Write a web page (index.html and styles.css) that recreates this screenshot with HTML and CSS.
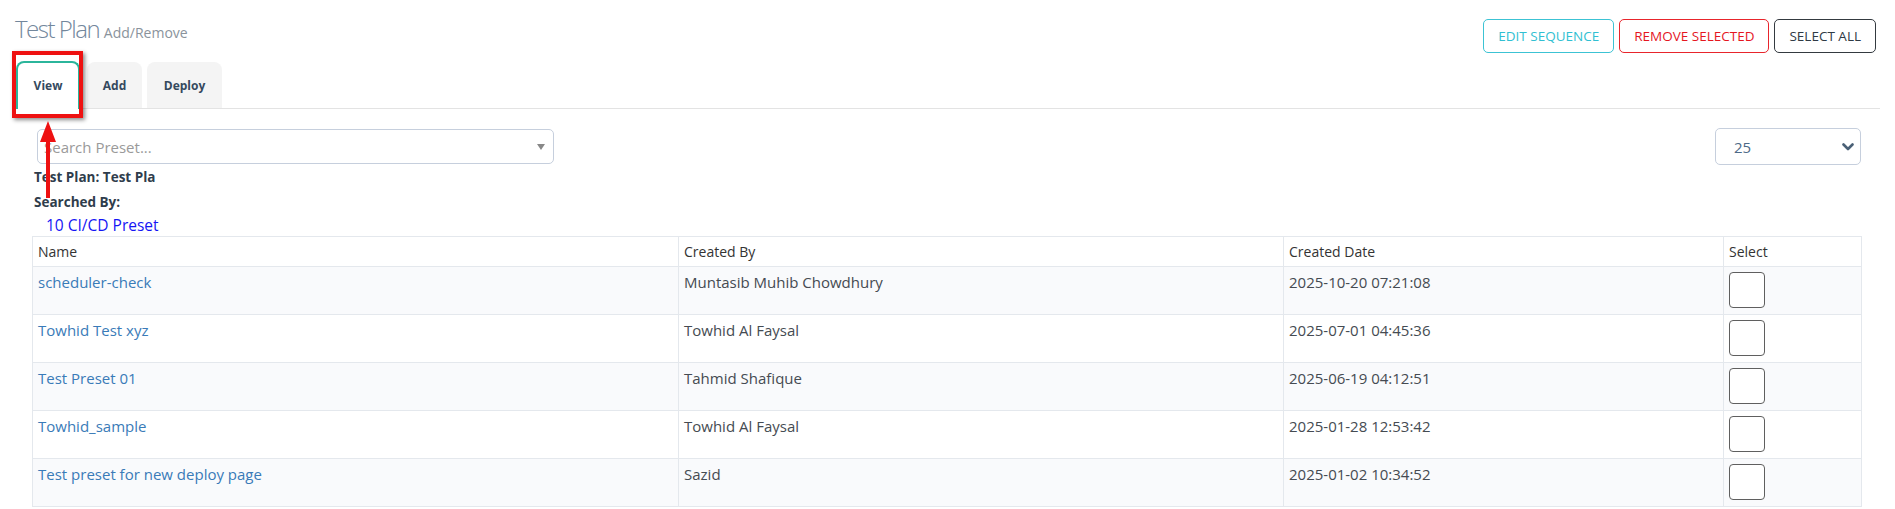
FILE: index.html
```html
<!DOCTYPE html>
<html lang="en">
<head>
<meta charset="utf-8">
<title>Test Plan Add/Remove</title>
<link rel="stylesheet" href="styles.css">
</head>
<body>
<div class="page">
  <div class="header">
    <h3 class="title">Test Plan <small>Add/Remove</small></h3>
    <div class="actions">
      <button class="btn btn-info">EDIT SEQUENCE</button>
      <button class="btn btn-danger">REMOVE SELECTED</button>
      <button class="btn btn-dark">SELECT ALL</button>
    </div>
  </div>

  <ul class="tabs">
    <li class="tab active">View</li>
    <li class="tab">Add</li>
    <li class="tab">Deploy</li>
  </ul>

  <div class="panel">
    <div class="search-row">
      <div class="search-select">
        <span class="placeholder">Search Preset...</span>
        <svg class="tri" width="8" height="6" viewBox="0 0 8 6"><path d="M0 0 H8 L4 6 Z" fill="#888"/></svg>
      </div>
      <div class="size-select">
        <span>25</span>
        <svg class="chev" width="12" height="8" viewBox="0 0 12 8"><path d="M1.5 1.5 L6 6 L10.5 1.5" fill="none" stroke="#4a6076" stroke-width="2.6" stroke-linecap="round" stroke-linejoin="round"/></svg>
      </div>
    </div>

    <div class="meta">
      <div class="meta-line">Test Plan: Test Pla</div>
      <div class="meta-line">Searched By:</div>
      <div class="preset-count">10 CI/CD Preset</div>
    </div>

    <table class="grid">
      <colgroup>
        <col class="c-name"><col class="c-by"><col class="c-date"><col class="c-sel">
      </colgroup>
      <thead>
        <tr><th>Name</th><th>Created By</th><th>Created Date</th><th>Select</th></tr>
      </thead>
      <tbody>
        <tr><td><a href="#">scheduler-check</a></td><td>Muntasib Muhib Chowdhury</td><td>2025-10-20 07:21:08</td><td><input type="checkbox" class="check"></td></tr>
        <tr><td><a href="#">Towhid Test xyz</a></td><td>Towhid Al Faysal</td><td>2025-07-01 04:45:36</td><td><input type="checkbox" class="check"></td></tr>
        <tr><td><a href="#">Test Preset 01</a></td><td>Tahmid Shafique</td><td>2025-06-19 04:12:51</td><td><input type="checkbox" class="check"></td></tr>
        <tr><td><a href="#">Towhid_sample</a></td><td>Towhid Al Faysal</td><td>2025-01-28 12:53:42</td><td><input type="checkbox" class="check"></td></tr>
        <tr><td><a href="#">Test preset for new deploy page</a></td><td>Sazid</td><td>2025-01-02 10:34:52</td><td><input type="checkbox" class="check"></td></tr>
      </tbody>
    </table>
  </div>
</div>

<div class="callout-box"></div>
<svg class="callout-arrow" width="20" height="82" viewBox="0 0 20 82">
  <path d="M10 0 L18 21 L12 21 L12 77 L8 77 L8 21 L2 21 Z" fill="#ee1111"/>
</svg>
</body>
</html>
```

FILE: styles.css
```css
* { box-sizing: border-box; }

body {
  margin: 0;
  position: relative;
  background: #fff;
  font-family: "Open Sans", "Liberation Sans", sans-serif;
  color: #444;
}

.page {
  padding: 0 15px;
}

.header {
  display: flex;
  justify-content: space-between;
  align-items: flex-start;
}

.title {
  margin: 12px 0 0 0;
  font-size: 24px;
  line-height: 33px;
  font-weight: 300;
  color: #73879c;
  letter-spacing: -1.5px;
}

.title small {
  font-size: 14px;
  font-weight: 400;
  color: #8a939c;
  letter-spacing: 0;
}

.actions {
  margin-top: 19px;
  display: flex;
  gap: 5px;
  margin-right: 4px;
}

.btn {
  height: 34px;
  padding: 0 14px;
  background: #fff;
  border: 1px solid;
  border-radius: 5px;
  font-family: "Open Sans", "Liberation Sans", sans-serif;
  font-size: 13.5px;
  font-weight: 500;
}

.btn-info { color: #31bfd2; border-color: #3cc3d4; }
.btn-danger { color: #e5161f; border-color: #e8252c; }
.btn-dark { color: #2f3a45; border-color: #343a40; }

.tabs {
  list-style: none;
  margin: 8px 0 0;
  padding: 0;
  display: flex;
  align-items: flex-end;
  height: 48px;
  border-bottom: 1px solid #e3e3e3;
}

.tab {
  height: 46px;
  display: flex;
  align-items: center;
  justify-content: center;
  margin-right: 5px;
  background: #f4f4f4;
  border-radius: 8px 8px 0 0;
  font-size: 12px;
  font-weight: 700;
  color: #34495e;
}

.tab:nth-child(2) { width: 55px; }
.tab:nth-child(3) { width: 75px; }

.tab.active {
  width: 64px;
  height: 48px;
  margin-left: 1px;
  margin-right: 7px;
  margin-bottom: -1px;
  background: #fff;
  border: 2px solid #2bb59b;
  border-bottom: none;
  padding-bottom: 2px;
}

.panel {
  padding: 0 18px 0 17px;
}

.search-row {
  margin-top: 19px;
  display: flex;
  justify-content: space-between;
  align-items: center;
}

.search-select {
  margin-left: 5px;
  width: 517px;
  height: 35px;
  border: 1px solid #c6cfdd;
  border-radius: 5px;
  display: flex;
  align-items: center;
  justify-content: space-between;
  padding: 0 8px 0 6px;
}

.placeholder {
  font-size: 15px;
  color: #9a9a9a;
}

.size-select {
  width: 146px;
  height: 37px;
  border: 1px solid #c6cfdd;
  border-radius: 5px;
  display: flex;
  align-items: center;
  justify-content: space-between;
  padding: 0 6px 0 18px;
  margin-right: 1px;
  font-size: 15px;
  color: #4d6a88;
}

.meta {
  padding-left: 2px;
}

.meta-line {
  font-size: 13.5px;
  line-height: 25px;
  font-weight: 700;
  color: #2f3d4c;
}

.preset-count {
  padding-left: 12px;
  font-size: 15.5px;
  line-height: 21px;
  color: #1515f5;
}

.grid {
  width: 100%;
  border-collapse: collapse;
  table-layout: fixed;
  border: 1px solid #e4e8ed;
}

.c-name { width: 646px; }
.c-by { width: 605px; }
.c-date { width: 440px; }
.c-sel { width: auto; }

.grid th {
  height: 30px;
  padding: 0 5px;
  text-align: left;
  font-size: 14px;
  font-weight: 400;
  color: #333;
  border: 1px solid #e4e8ed;
}

.grid td {
  height: 48px;
  padding: 5px 5px 0;
  vertical-align: top;
  font-size: 15px;
  line-height: 21px;
  color: #454b52;
  border: 1px solid #e4e8ed;
}

.grid tbody tr:nth-child(odd) td { background: #f9fafc; }

.grid a {
  color: #3a7bb8;
  text-decoration: none;
}

.check {
  appearance: none;
  -webkit-appearance: none;
  display: block;
  margin: 0;
  width: 36px;
  height: 36px;
  background: #fff;
  border: 1px solid #5f5f5f;
  border-radius: 4px;
}

.callout-box {
  position: absolute;
  left: 12px;
  top: 51px;
  width: 71px;
  height: 67px;
  border: 4px solid #ee1111;
  box-shadow: 2px 2px 4px rgba(0, 0, 0, 0.45);
}

.callout-arrow {
  position: absolute;
  left: 38px;
  top: 121px;
}
```
